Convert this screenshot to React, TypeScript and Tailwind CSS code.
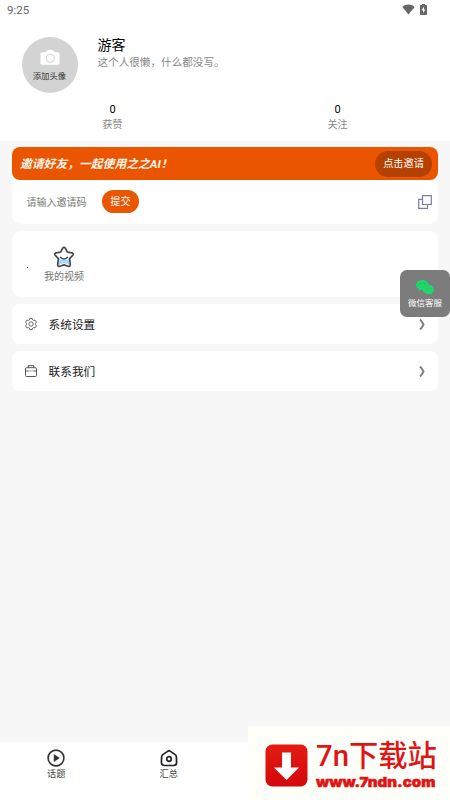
import type { ReactNode } from "react";
import clsx from "clsx";

function StatusBar() {
  return (
    <div className="flex h-5 items-center justify-between pl-[7px] pr-[23px] text-[#666]">
      <span className="text-[11.5px] leading-5">9:25</span>
      <div className="flex items-center gap-[5px] pb-[2px]">
        <svg className="h-[11px] w-[13px]" viewBox="0 0 13 11" fill="currentColor">
          <path d="M.4 3C4-.2 9-.2 12.600 3L6.500 10.600z" />
        </svg>
        <svg className="h-[11px] w-[7px]" viewBox="0 0 7 11">
          <path
            d="M2 0h3v1h1.200q.8 0 .8.800v8.400q0 .8-.8.800H.8Q0 11 0 10.200V1.800Q0 1 .8 1H2z"
            fill="currentColor"
          />
          <path d="M4 2.500 1.700 6.300h1.400v2.900l2.200-3.800H4z" fill="#fff" />
        </svg>
      </div>
    </div>
  );
}

function Stat({ value, label }: { value: number; label: string }) {
  return (
    <div className="flex flex-1 flex-col items-center">
      <span className="text-[11px] leading-[14px] text-black">{value}</span>
      <span className="text-[10px] leading-[15px] text-[#888]">{label}</span>
    </div>
  );
}

function Profile() {
  return (
    <header className="h-[141px] bg-white">
      <StatusBar />
      <div className="flex pl-[21.500px] pt-[16.500px]">
        <div className="flex size-14 flex-col items-center rounded-full bg-[#d3d3d3] pt-[13px]">
          <svg className="h-[15px] w-5" viewBox="0 0 20 15">
            <path
              d="M6 2.200 7 .6Q7.300 0 8 0h4.500q.7 0 1 .6l1 1.600H18q1.500 0 1.500 1.500v9.500q0 1.500-1.500 1.500H2Q.5 14.700.5 13.200V3.700Q.5 2.200 2 2.200z"
              fill="#fff"
            />
            <circle cx="10.300" cy="8.200" r="4" fill="#fff" stroke="#d3d3d3" strokeWidth="1.100" />
          </svg>
          <span className="mt-[5px] text-[8.400px] leading-3 text-[#333]">添加头像</span>
        </div>
        <div className="ml-5 flex flex-col">
          <span className="text-[14px] leading-[17px] text-black">游客</span>
          <span className="mt-px text-[10.600px] leading-4 text-[#888]">这个人很懒，什么都没写。</span>
        </div>
      </div>
      <div className="mt-2.5 flex">
        <Stat value={0} label="获赞" />
        <Stat value={0} label="关注" />
      </div>
    </header>
  );
}

function InviteCard() {
  return (
    <section className="h-[77px] rounded-[9px] bg-white">
      <div className="flex h-[33px] items-center justify-between rounded-[8px] bg-[#eb5500] pl-2 pr-1.5">
        <span className="pt-0.5 text-[11.800px] font-bold italic text-[#fff3e8]">
          邀请好友，一起使用之之AI！
        </span>
        <button className="h-[26px] w-[57px] rounded-full bg-[#b54100] text-[10.200px] text-white">
          点击邀请
        </button>
      </div>
      <div className="flex h-11 items-center pl-[14.500px] pr-1.5">
        <span className="w-[75.500px] text-[10px] text-[#777]">请输入邀请码</span>
        <button className="mb-px h-[23px] w-[37px] rounded-full bg-[#eb5500] text-[10.200px] text-white">
          提交
        </button>
        <svg className="mb-px ml-auto size-3.5" viewBox="0 0 14 14" fill="none" stroke="#777da3" strokeWidth="1.200">
          <path d="M4.500.7h8.800v8.800H4.500z" />
          <path d="M4.500 4.300H.7v9h8.800V9.500" />
        </svg>
      </div>
    </section>
  );
}

function VideoCard() {
  return (
    <section className="flex h-[66px] items-center rounded-[9px] bg-white pl-[15px]">
      <span className="mt-1.5 size-px bg-[#222]" />
      <div className="ml-4 flex flex-col items-center pt-[3px]">
        <svg className="-mt-px mb-px h-[22px] w-[22px]" viewBox="0 0 22 22">
          <path d="M6 12.500q5 3 10 0l.8 6.500-5.800-2-5.800 2z" fill="#acd8f8" />
          <path
            d="M9.600 2.300q1.400-2 2.800 0l2 3.900 4.400.7q2.400.6.9 2.500l-3.100 3.200.7 5.900q.1 2.500-2.200 1.700L11 18.900l-4.100 1.300q-2.300.8-2.200-1.700l.7-5.900-3.100-3.200q-1.500-1.900.9-2.500l4.400-.7z"
            fill="none"
            stroke="#454b51"
            strokeWidth="1.700"
            strokeLinejoin="round"
          />
          <path d="M7.500 11.200q3.500 3.600 7 0" fill="none" stroke="#454b51" strokeWidth="1.500" strokeLinecap="round" />
        </svg>
        <span className="text-[10px] leading-4 text-[#777]">我的视频</span>
      </div>
    </section>
  );
}

function MenuRow({ icon, label }: { icon: ReactNode; label: string }) {
  return (
    <section className="flex h-10 items-center rounded-[8px] bg-white pl-[13px] pr-[13px]">
      {icon}
      <span className="ml-[11.500px] pt-[3px] text-[11.700px] text-[#222]">{label}</span>
      <svg className="ml-auto h-[11px] w-[6px]" viewBox="0 0 6 11" fill="none" stroke="#808080" strokeWidth="1.900">
        <path d="M1 .5q2.200 2 3.500 5-1.300 3-3.500 5" />
      </svg>
    </section>
  );
}

const gearIcon = (
  <svg className="size-3" viewBox="0 0 12 12" fill="none" stroke="#444" strokeWidth=".8" strokeLinejoin="round">
    <path d="M4.800.5h2.400l.5 1.400.9.500 1.500-.3 1.300 2-.9 1.300v1.200l.9 1.300-1.300 2-1.500-.3-.9.500-.5 1.400H4.800l-.5-1.400-.9-.5-1.500.3-1.300-2 .9-1.300V5.400L.6 4.100l1.300-2 1.500.3.900-.5z" />
    <circle cx="6" cy="6" r="2.200" />
  </svg>
);

const caseIcon = (
  <svg className="size-3" viewBox="0 0 12 12" fill="none" stroke="#444" strokeWidth=".9">
    <path d="M3.200 2.700V.6h5.600v2.100" />
    <rect x=".5" y="2.700" width="11" height="8.800" rx="1.200" />
    <path d="M.5 6h3.200M4.600 6h1M6.500 6h1M8.300 6h3.200" />
  </svg>
);

function WechatService() {
  return (
    <button className="fixed right-0 top-[270px] flex h-[47px] w-[50px] flex-col items-center rounded-[7px] bg-[#7c7c7c] pt-2.5">
      <svg className="h-[15px] w-[18px]" viewBox="0 0 18 15" fill="#20d66b">
        <path d="M6.300 0c3.500 0 6.100 2.100 6.300 4.700-3.300-.1-6.200 2-5.500 5.500-.8 0-1.500 0-2.200-.2L2.500 11.200 3 9.100C1.200 8.200 0 6.800 0 5 0 2.200 2.700 0 6.300 0z" />
        <path d="M12.600 4.500c3 0 5.400 2.300 5.400 5.100 0 1.400-.8 2.500-2 3.300l.3 1.700-1.900-.7c-4 .8-7.800-1.200-7.800-4.300 0-2.600 2.800-5.100 6-5.100z" />
        <g fill="#347750">
          <circle cx="4.300" cy="3.600" r=".5" />
          <circle cx="8.200" cy="3.600" r=".5" />
          <circle cx="11" cy="8.400" r=".3" />
          <circle cx="14.200" cy="8.400" r=".3" />
        </g>
      </svg>
      <span className="mt-0.5 text-[8.500px] leading-3 text-white">微信客服</span>
    </button>
  );
}

function Tab({ icon, label, className }: { icon: ReactNode; label: string; className?: string }) {
  return (
    <div className={clsx("flex w-1/4 flex-col items-center pt-[7px]", className)}>
      {icon}
      <span className="text-[9.200px] leading-[13px] text-[#444]">{label}</span>
    </div>
  );
}

function TabBar() {
  return (
    <nav className="flex h-[58px] bg-white">
      <Tab
        label="话题"
        icon={
          <svg className="size-[18px]" viewBox="0 0 18 18">
            <circle cx="9" cy="9" r="7.900" fill="none" stroke="#333" strokeWidth="1.600" />
            <path d="M6.800 5v8l6-4z" fill="#333" />
          </svg>
        }
      />
      <Tab
        label="汇总"
        icon={
          <svg className="size-[18px]" viewBox="0 0 18 18" fill="none" stroke="#222" strokeWidth="1.700">
            <path d="M8 2.100q1-.6 2 0l4.900 3.300q1.300.9 1.500 2.400l.2 5.700q0 3-3 3H4.400q-3 0-3-3l.2-5.700q.2-1.500 1.500-2.400z" />
            <circle cx="9" cy="10" r="2.300" />
          </svg>
        }
      />
    </nav>
  );
}

function DownloadBadge() {
  return (
    <aside className="fixed bottom-0 right-0 flex h-[74px] w-[202px] bg-[#fffffa] pl-[17px] pt-[13px]">
      <svg className="mt-[5px] h-[43px] w-[43px] shrink-0" viewBox="0 0 43 43">
        <defs>
          <linearGradient id="badge" x1="0" y1="0" x2="0" y2="1">
            <stop offset="0" stopColor="#e51b13" />
            <stop offset="1" stopColor="#d3080b" />
          </linearGradient>
        </defs>
        <rect x=".5" y=".5" width="42" height="42" rx="7" fill="url(#badge)" />
        <path d="M17 8.500h9v15h8L21.500 36 9 23.500h8z" fill="#fff" />
      </svg>
      <div className="ml-2 flex flex-col whitespace-nowrap text-[#df1515]">
        <span className="-mt-px text-[29.300px] font-medium leading-[36px]">7n下载站</span>
        <span className="origin-left scale-x-[1.1] text-[13.700px] font-black leading-[17px] [font-family:Inter,sans-serif] [-webkit-text-stroke:0.5px_#df1515]">
          www.7ndn.com
        </span>
      </div>
    </aside>
  );
}

export default function App() {
  return (
    <div className="flex h-screen flex-col overflow-hidden bg-[#f7f7f7] [font-family:Roboto,'Noto_Sans_CJK_SC',sans-serif]">
      <Profile />
      <main className="flex flex-1 flex-col gap-[7px] px-3 pt-1.5">
        <InviteCard />
        <VideoCard />
        <MenuRow icon={gearIcon} label="系统设置" />
        <MenuRow icon={caseIcon} label="联系我们" />
      </main>
      <TabBar />
      <WechatService />
      <DownloadBadge />
    </div>
  );
}
